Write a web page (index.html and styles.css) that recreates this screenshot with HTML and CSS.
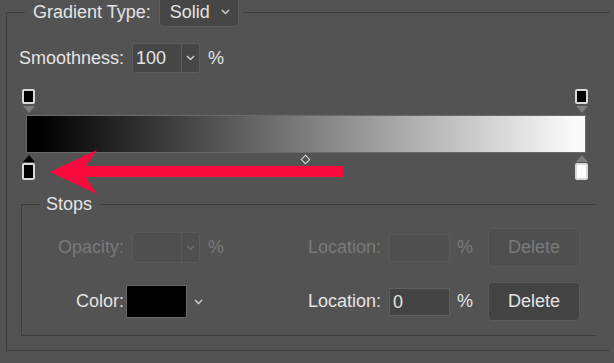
FILE: index.html
```html
<!DOCTYPE html>
<html lang="en">
<head>
  <meta charset="UTF-8">
  <title>Gradient Editor</title>
  <link rel="stylesheet" href="styles.css">
</head>
<body>
  <fieldset class="panel">
    <legend class="panel-title">
      Gradient Type:
      <span class="select">
        Solid
        <svg class="chevron" width="9" height="6" viewBox="0 0 9 6"><polyline points="1,1 4.5,4.5 8,1"/></svg>
      </span>
    </legend>

    <div class="smooth-row">
      <span>Smoothness:</span>
      <span class="combo">
        <span class="combo-value">100</span>
        <span class="combo-btn"><svg class="chevron" width="9" height="6" viewBox="0 0 9 6"><polyline points="1,1 4.5,4.5 8,1"/></svg></span>
      </span>
      <span class="unit">%</span>
    </div>

    <!-- Gradient ramp with opacity stops above and color stops below -->
    <div class="ramp">
      <div class="stop-row top">
        <div class="stop"><span class="stop-box"></span><span class="tri down"></span></div>
        <div class="stop"><span class="stop-box"></span><span class="tri down"></span></div>
      </div>
      <div class="ramp-bar"></div>
      <div class="stop-row bottom">
        <div class="stop"><span class="tri up selected"></span><span class="stop-box"></span></div>
        <span class="midpoint"></span>
        <div class="stop"><span class="tri up"></span><span class="stop-box white"></span></div>
      </div>
    </div>

    <fieldset class="stops">
      <legend>Stops</legend>

      <div class="field-row disabled">
        <span class="field-label">Opacity:</span>
        <div class="field-main">
          <span class="combo">
            <span class="combo-value"></span>
            <span class="combo-btn"><svg class="chevron" width="9" height="6" viewBox="0 0 9 6"><polyline points="1,1 4.5,4.5 8,1"/></svg></span>
          </span>
          <span class="unit">%</span>
        </div>
        <span class="field-label2">Location:</span>
        <span class="field-input"></span>
        <span class="field-unit">%</span>
        <span class="btn">Delete</span>
      </div>

      <div class="field-row">
        <span class="field-label">Color:</span>
        <div class="field-main">
          <span class="swatch"></span>
          <svg class="chevron swatch-arrow" width="9" height="6" viewBox="0 0 9 6"><polyline points="1,1 4.5,4.5 8,1"/></svg>
        </div>
        <span class="field-label2">Location:</span>
        <span class="field-input">0</span>
        <span class="field-unit">%</span>
        <span class="btn">Delete</span>
      </div>
    </fieldset>
  </fieldset>

  <!-- Annotation arrow pointing at the first color stop -->
  <svg class="arrow" width="614" height="363" viewBox="0 0 614 363">
    <polygon points="50,172 97,150 86,166 343,166 343,177 86,177 97,194"/>
  </svg>
</body>
</html>
```

FILE: styles.css
```css
* {
  box-sizing: border-box;
}

body {
  margin: 0;
  width: 614px;
  height: 363px;
  overflow: hidden;
  position: relative;
  background: #535353;
  color: #e4e4e4;
  font-family: 'Liberation Sans', Arial, sans-serif;
  font-size: 18px;
}

.chevron polyline {
  fill: none;
  stroke: #cfcfcf;
  stroke-width: 1.5;
}

.panel {
  margin: -3px 0 0 6px;
  width: 604px;
  min-width: 0;
  border: 1px solid #3e3e3e;
  border-right: none;
  padding: 16px 14px 14px 12px;
}

.panel-title {
  display: flex;
  align-items: center;
  height: 30px;
  margin-left: 6px;
  padding: 0 4px 0 8px;
}

.select {
  display: flex;
  align-items: center;
  justify-content: space-between;
  width: 80px;
  height: 30px;
  margin-left: 8px;
  padding: 0 8px 0 10px;
  background: #464646;
  border: 1px solid #5c5c5c;
  border-radius: 4px;
}

.smooth-row {
  display: flex;
  align-items: center;
  height: 30px;
}

.combo {
  display: flex;
  width: 68px;
  height: 30px;
  margin-left: 8px;
  background: #464646;
  border: 1px solid #5c5c5c;
  border-radius: 3px;
}

.combo-value {
  width: 48px;
  padding-left: 3px;
  line-height: 28px;
}

.combo-btn {
  flex: 1;
  display: flex;
  align-items: center;
  justify-content: center;
  border-left: 1px solid #5c5c5c;
}

.unit {
  margin-left: 8px;
}

/* Ramp */
.ramp {
  margin: 16px 8px 0 3px;
}

.stop-row {
  display: flex;
  justify-content: space-between;
  align-items: flex-start;
}

.stop-row.top {
  height: 26px;
}

.stop-row.bottom {
  height: 27px;
  padding-top: 2px;
}

.stop {
  width: 13px;
  display: flex;
  flex-direction: column;
  align-items: center;
}

.stop-box {
  width: 13px;
  height: 15px;
  background: #000;
  border: 2px solid #d9d9d9;
  border-radius: 2px;
}

.stop-row.bottom .stop-box {
  height: 17px;
  margin-top: 1px;
}

.stop-box.white {
  background: #fff;
}

.tri {
  width: 0;
  height: 0;
  border-left: 6px solid transparent;
  border-right: 6px solid transparent;
}

.tri.down {
  margin-top: 2px;
  border-top: 7px solid #7d7d7d;
}

.tri.up {
  border-bottom: 7px solid #7d7d7d;
}

.tri.up.selected {
  border-bottom-color: #000;
}

.midpoint {
  width: 7px;
  height: 7px;
  margin-top: 1px;
  border: 1.5px solid #dedede;
  transform: rotate(45deg);
}

.ramp-bar {
  height: 38px;
  margin: 0 2px 0 4px;
  border: 1px solid #6b6b6b;
  background: linear-gradient(to right, #000 2%, #fafafa 98%);
}

/* Stops group */
.stops {
  margin: 14px 0 0 2px;
  min-width: 0;
  border: 1px solid #3e3e3e;
  border-right: none;
  padding: 14px 0;
}

.stops legend {
  margin-left: 18px;
  padding: 0 8px 0 6px;
  line-height: 20px;
}

.field-row {
  display: flex;
  align-items: center;
  height: 39px;
}

.field-row + .field-row {
  margin-top: 15px;
}

.field-label {
  width: 102px;
  text-align: right;
}

.field-main {
  display: flex;
  align-items: center;
  width: 184px;
}

.field-main .combo {
  height: 31px;
}

.field-label2 {
  width: 73px;
  text-align: right;
}

.field-input {
  width: 61px;
  height: 28px;
  margin-left: 8px;
  padding-left: 3px;
  line-height: 26px;
  background: #444;
  border: 1px solid #5e5e5e;
}

.field-unit {
  width: 31px;
  margin-left: 7px;
}

.btn {
  display: flex;
  align-items: center;
  justify-content: center;
  width: 92px;
  height: 39px;
  background: #434343;
  border: 1px solid #5a5a5a;
  border-radius: 4px;
}

.swatch {
  width: 61px;
  height: 33px;
  margin-left: 2px;
  background: #000;
  border: 1px solid #686868;
}

.swatch-arrow {
  margin-left: 7px;
}

.field-row.disabled {
  color: #7a7a7a;
}

.field-row.disabled .combo,
.field-row.disabled .field-input,
.field-row.disabled .btn {
  background: #4f4f4f;
  border-color: #5a5a5a;
}

.field-row.disabled .combo-btn {
  border-left-color: #5a5a5a;
}

.field-row.disabled .chevron polyline {
  stroke: #6e6e6e;
}

.arrow {
  position: absolute;
  top: 0;
  left: 0;
  pointer-events: none;
}

.arrow polygon {
  fill: #f90a3c;
}
```
